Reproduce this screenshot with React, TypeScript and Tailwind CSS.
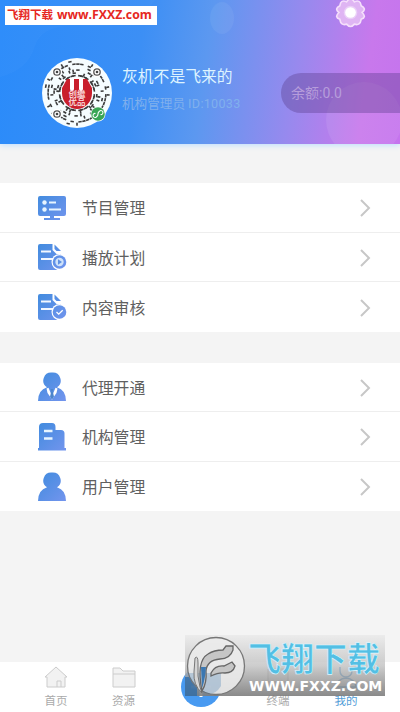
import { useId, type ReactNode } from 'react';

const ring = (radius: number, count: number, seed: number) =>
  Array.from({ length: count }, (_, i) => ({
    key: `${radius}-${i}`,
    angle: (360 / count) * i,
    radius,
    on: (i * seed + i * i * 3 + Math.round(radius)) % 7 < 3,
    wide: (i * seed) % 3 === 0,
  })).filter((d) => d.on);

const dots = [
  ...ring(31.5, 50, 5),
  ...ring(28.5, 46, 3),
  ...ring(25.5, 42, 4),
  ...ring(22.5, 36, 5),
  ...ring(19.5, 34, 2),
  ...ring(17, 56, 3),
];

function Avatar() {
  return (
    <svg viewBox="-35 -35 70 70" className="size-[70px] shrink-0">
      <circle r="35" fill="#f6fdff" />
      {dots.map((d) => (
        <rect
          key={d.key}
          x={-0.8}
          y={-d.radius - 1.2}
          width={d.wide ? 3.4 : 1.6}
          height={d.wide ? 1.6 : 3}
          fill="#3b3b3b"
          transform={`rotate(${d.angle})`}
        />
      ))}
      {[[-20, -21], [20, -21], [-20, 21]].map(([x, y]) => (
        <g key={`${x}${y}`} transform={`translate(${x} ${y})`}>
          <circle r="5.2" fill="#fff" />
          <circle r="3.2" fill="none" stroke="#555" strokeWidth="1.3" />
          <circle r="1.3" fill="#444" />
        </g>
      ))}
      <circle r="15.5" fill="#fff" />
      <path d="M-15 0V-5L-10-14H10L15-5V0A15 16 0 0 1-15 0Z" fill="#c91f2c" />
      <path d="M-7-15h4v11a2 2 0 0 1-4 0ZM2-15h4v11a2 2 0 0 1-4 0Z" fill="#fff" />
      <text y="3.5" textAnchor="middle" fontSize="8.5" fontWeight="500" fill="#ffe9e9">创繼</text>
      <text y="12" textAnchor="middle" fontSize="8.5" fontWeight="500" fill="#ffe9e9">优品</text>
      <circle cx="21" cy="21" r="7.5" fill="#fff" />
      <circle cx="21" cy="21" r="6.8" fill="#3aa655" />
      <path d="M18.5 20.5a2 2 0 1 0 1 3.300q1.500-.8 1.500-2.800t1.500-2.800a2 2 0 1 1 1 3.300" fill="none" stroke="#fff" strokeWidth="1.100" />
    </svg>
  );
}

function MenuIcon({ children }: { children: (fill: string) => ReactNode }) {
  const id = useId();
  return (
    <svg viewBox="0 0 30 30" className="size-[30px] shrink-0">
      <defs>
        <linearGradient id={id} x1="0" y1="0" x2="30" y2="30" gradientUnits="userSpaceOnUse">
          <stop offset="0" stopColor="#3f8bde" />
          <stop offset="1" stopColor="#7595ee" />
        </linearGradient>
      </defs>
      {children(`url(#${id})`)}
    </svg>
  );
}

const ScreenIcon = () => (
  <MenuIcon>
    {(fill) => (
      <>
        <path d="M3 3h24a2 2 0 0 1 2 2v16a2 2 0 0 1-2 2H17v2h6v2H7v-2h6v-2H3a2 2 0 0 1-2-2V5a2 2 0 0 1 2-2Z" fill={fill} />
        <circle cx="7.500" cy="9.500" r="2.200" fill="#e6f5ff" />
        <circle cx="7.500" cy="16.500" r="2.200" fill="#e6f5ff" />
        <path d="M12 9.500h7M12 16.500h12" stroke="#e6f5ff" strokeWidth="2.200" />
      </>
    )}
  </MenuIcon>
);

const DocIcon = ({ mark }: { mark: 'play' | 'check' }) => (
  <MenuIcon>
    {(fill) => (
      <>
        <path d="M3 2h12.500v6l4 4H24v5l-4 11H3a2 2 0 0 1-2-2V4a2 2 0 0 1 2-2Z" fill={fill} />
        <path d="M17.500 2.500 24 9h-4.500l-2-2Z" fill={fill} />
        <path d="M4 9.500h10M4 17h13" stroke="#f1f8ff" strokeWidth="2.200" />
        <circle cx="22.500" cy="20" r="8" fill="#fff" />
        <circle cx="22.500" cy="20" r="6.800" fill={fill} />
        {mark === 'play' ? (
          <>
            <circle cx="22.500" cy="20" r="4.200" fill="#cfe2fa" />
            <path d="m21 17.300 4 2.700-4 2.700Z" fill="#5d90e2" />
          </>
        ) : (
          <path d="m19.500 20 2.200 2.200 4-4" fill="none" stroke="#fff" strokeWidth="1.300" />
        )}
      </>
    )}
  </MenuIcon>
);

const PersonIcon = ({ suit = false }: { suit?: boolean }) => (
  <MenuIcon>
    {(fill) => (
      <>
        <path d="M15 .5a8 8 0 0 1 5 14.700Q29 18 29 29H1Q1 18 10 15.200A8 8 0 0 1 15 .5Z" fill={fill} />
        {suit && (
          <>
            <path d="m9.500 16.500 2-.8 3 7.300 1 5-5-7ZM20.500 16.500l-2-.8-3 7.300-1 5 5-7Z" fill="#fff" />
            <path d="M13.500 17h3l-.8 2.500 1.300 5-2 3-2-3 1.300-5Z" fill="#4d85cc" />
          </>
        )}
      </>
    )}
  </MenuIcon>
);

const BuildingIcon = () => (
  <MenuIcon>
    {(fill) => (
      <>
        <path d="M2 26V5q0-4 4-4h9q3.500 0 3.500 4v3H24q3.500 0 3.500 3.500V26H29v2.500H1V26Z" fill={fill} />
        <path d="M7 9h8.500M7 16.500h8.500" stroke="#e6f5ff" strokeWidth="2.400" />
      </>
    )}
  </MenuIcon>
);

const groups = [
  [
    { label: '节目管理', icon: <ScreenIcon /> },
    { label: '播放计划', icon: <DocIcon mark="play" /> },
    { label: '内容审核', icon: <DocIcon mark="check" /> },
  ],
  [
    { label: '代理开通', icon: <PersonIcon suit /> },
    { label: '机构管理', icon: <BuildingIcon /> },
    { label: '用户管理', icon: <PersonIcon /> },
  ],
];

function Header() {
  return (
    <header className="relative flex h-36 shrink-0 items-start bg-linear-[98deg,#2a8bfa_0%,#3c8ff5_35%,#5c98f0_51%,#9889ee_73%,#c878ec_90%,#c574ee_100%] pt-[58px] pl-[42px] shadow-[0_1px_6px_#b9dcff]">
      <svg viewBox="0 0 400 144" className="absolute inset-0 h-36 w-full">
        <path d="M0 77Q28 70 35 46T88 26T155 0H0Z" fill="#fff" opacity=".025" />
        <ellipse cx="222" cy="18" rx="12" ry="16" fill="#fff" opacity=".06" />
        <circle cx="364" cy="120" r="38" fill="#fff" opacity=".08" />
      </svg>

      {/* site mark */}
      <div className="absolute top-[6px] left-[5px] flex h-[19px] w-[152px] items-center gap-1 bg-white pl-[2px] whitespace-nowrap text-[#e62722]">
        <span className="text-[11.500px] font-bold">飞翔下载</span>
        <span className="font-[Open_Sans] text-[12.300px] font-bold">www.FXXZ.com</span>
      </div>

      <svg viewBox="-16 -16 32 32" className="absolute -top-[3px] left-[334.500px] size-[31px]">
        <path
          d="M-4-11Q0-17 4-11 10-14 11-7 17-4 12 0 17 5 11 7 10 14 4 12 0 17-4 12-10 14-11 7-17 5-12 0-17-4-11-7-10-14-4-11Z"
          fill="#dfb5f3"
          stroke="#f5dffb"
          strokeWidth="1.700"
        />
        <circle r="7" fill="#fff" opacity=".35" />
        <circle r="5.500" fill="#fff" />
      </svg>

      <div className="relative flex">
        <Avatar />
        <div className="pt-[9px] pl-[10px] whitespace-nowrap">
          <h1 className="text-[15.800px] leading-5 text-[#ddf3ff]">灰机不是飞来的</h1>
          <p className="mt-[7px] text-[12.600px] leading-5 text-[#80b0ed]">
            机构管理员 <span className="tracking-[0.3px]">ID:10033</span>
          </p>
        </div>
      </div>

      <div className="absolute top-[73px] right-0 h-10 w-[119px] rounded-l-full bg-[#5a3c8c]/38 pl-[10px] text-[14px] leading-[41px] text-[#b69ddb]">
        余额:0.0
      </div>
    </header>
  );
}

function Watermark() {
  return (
    <div className="absolute top-[635px] left-[185px] flex h-[61px] w-[200px] bg-linear-to-b from-[#e8e8e8]/70 via-[#bdbdbd]/75 to-[#7d7d7d]/90">
      <svg viewBox="0 0 62 61" className="h-[61px] w-[62px] shrink-0">
        <path d="M0 42H12V61H0Z" fill="#2c6ba8" opacity=".75" />
        <circle cx="31" cy="31" r="28.500" fill="#ebebeb" fillOpacity=".9" stroke="#777" strokeWidth="1.300" />
        <path d="M3.500 38H36V51Q31 59 24 59 8 54 3.500 38Z" fill="#2c6ba8" opacity=".25" />
        <path d="M10 23Q13 20 13 28 12 42 15 52L17 58Q8 50 9 37Z" fill="#d5d5d5" stroke="#777" />
        <path
          d="M17 56Q11 26 23 19 29 15 38 15L41 11 48 11V15Q45 24 35 24 22 25 21 36 22 48 17 56Z"
          fill="#c6c6c6"
          stroke="#666"
          strokeWidth="1.300"
        />
        <path d="M16 32H21Q20 46 17 53Z" fill="#3b78b2" />
        <path d="M26 38Q30 30 39 31L47 27 50 31Q48 38 40 38 34 37 26 41Z" fill="#c6c6c6" stroke="#666" strokeWidth="1.300" />
      </svg>
      <div className="flex flex-col whitespace-nowrap">
        <span className="h-[43px] pt-[6px] pl-px text-[33px] leading-[38px] font-bold text-[#53bfe4] [-webkit-text-stroke:0.6px_#dff7ff]">
          飞翔下载
        </span>
        <span className="pl-[2px] font-[DejaVu_Sans] text-[14px] leading-4 font-bold text-white">WWW.FXXZ.COM</span>
      </div>
    </div>
  );
}

export default function App() {
  return (
    <div className="relative flex h-[712px] w-[400px] flex-col overflow-hidden bg-[#f4f4f4] font-['Roboto','Noto_Sans_CJK_SC',sans-serif]">
      <Header />

      <main className="flex flex-1 flex-col gap-[31px] pt-[39px]">
        {groups.map((group, i) => (
          <section key={i} className="divide-y divide-[#eeeeee] bg-white">
            {group.map(({ label, icon }) => (
              <button key={label} className="flex h-[49.500px] w-full items-center pt-px pr-[29px] pl-[37px] text-left">
                {icon}
                <span className="pt-[3px] pl-[15px] text-[15.800px] text-[#606060]">{label}</span>
                <svg viewBox="0 0 12 20" className="mt-px ml-auto h-5 w-3" fill="none" stroke="#c7c7c7" strokeWidth="2">
                  <path d="m2 2 8 8-8 8" />
                </svg>
              </button>
            ))}
          </section>
        ))}
      </main>

      <nav className="grid h-[50px] shrink-0 grid-cols-[90px_45px_110px_44px_92px] bg-white pl-[11px] text-center text-[11.500px] text-[#aaa]">
        <div className="flex flex-col items-center gap-1 pt-[3px]">
          <svg viewBox="0 0 24 24" className="size-6 shrink-0" fill="#f2f2f2" stroke="#ccc">
            <path d="M1 12 12 2l11 10h-2v10H3V12ZM13 22v-6h4v6" />
          </svg>
          <span>首页</span>
        </div>
        <div className="flex flex-col items-center gap-1 pt-[3px]">
          <svg viewBox="0 0 24 24" className="size-6 shrink-0" fill="#f2f2f2" stroke="#ccc">
            <path d="M1 22V3h7l3 3h12v16ZM1 9h22" />
          </svg>
          <span>资源</span>
        </div>
        <div className="flex justify-center pt-[5px]">
          <svg viewBox="0 0 40 40" className="size-10 shrink-0">
            <circle cx="20" cy="20" r="20" fill="#489af1" />
            <path d="M20 10v20M10 20h20" stroke="#fff" strokeWidth="3" />
          </svg>
        </div>
        <div className="flex flex-col items-center gap-1 pt-[3px]">
          <svg viewBox="0 0 24 24" className="size-6 shrink-0" fill="#f2f2f2" stroke="#bbb">
            <path d="M2 4h20v13H2ZM8 21h8" />
          </svg>
          <span>终端</span>
        </div>
        <div className="flex flex-col items-center gap-1 pt-[3px] text-[#529dd7]">
          <svg viewBox="0 0 24 24" className="size-6 shrink-0" fill="none" stroke="#4a9be0" strokeWidth="1.500">
            <path d="M6 2v4a6 6 0 0 0 12 0V2M2 22q1-8 10-9 9 1 10 9Z" />
          </svg>
          <span>我的</span>
        </div>
      </nav>

      <Watermark />
    </div>
  );
}
